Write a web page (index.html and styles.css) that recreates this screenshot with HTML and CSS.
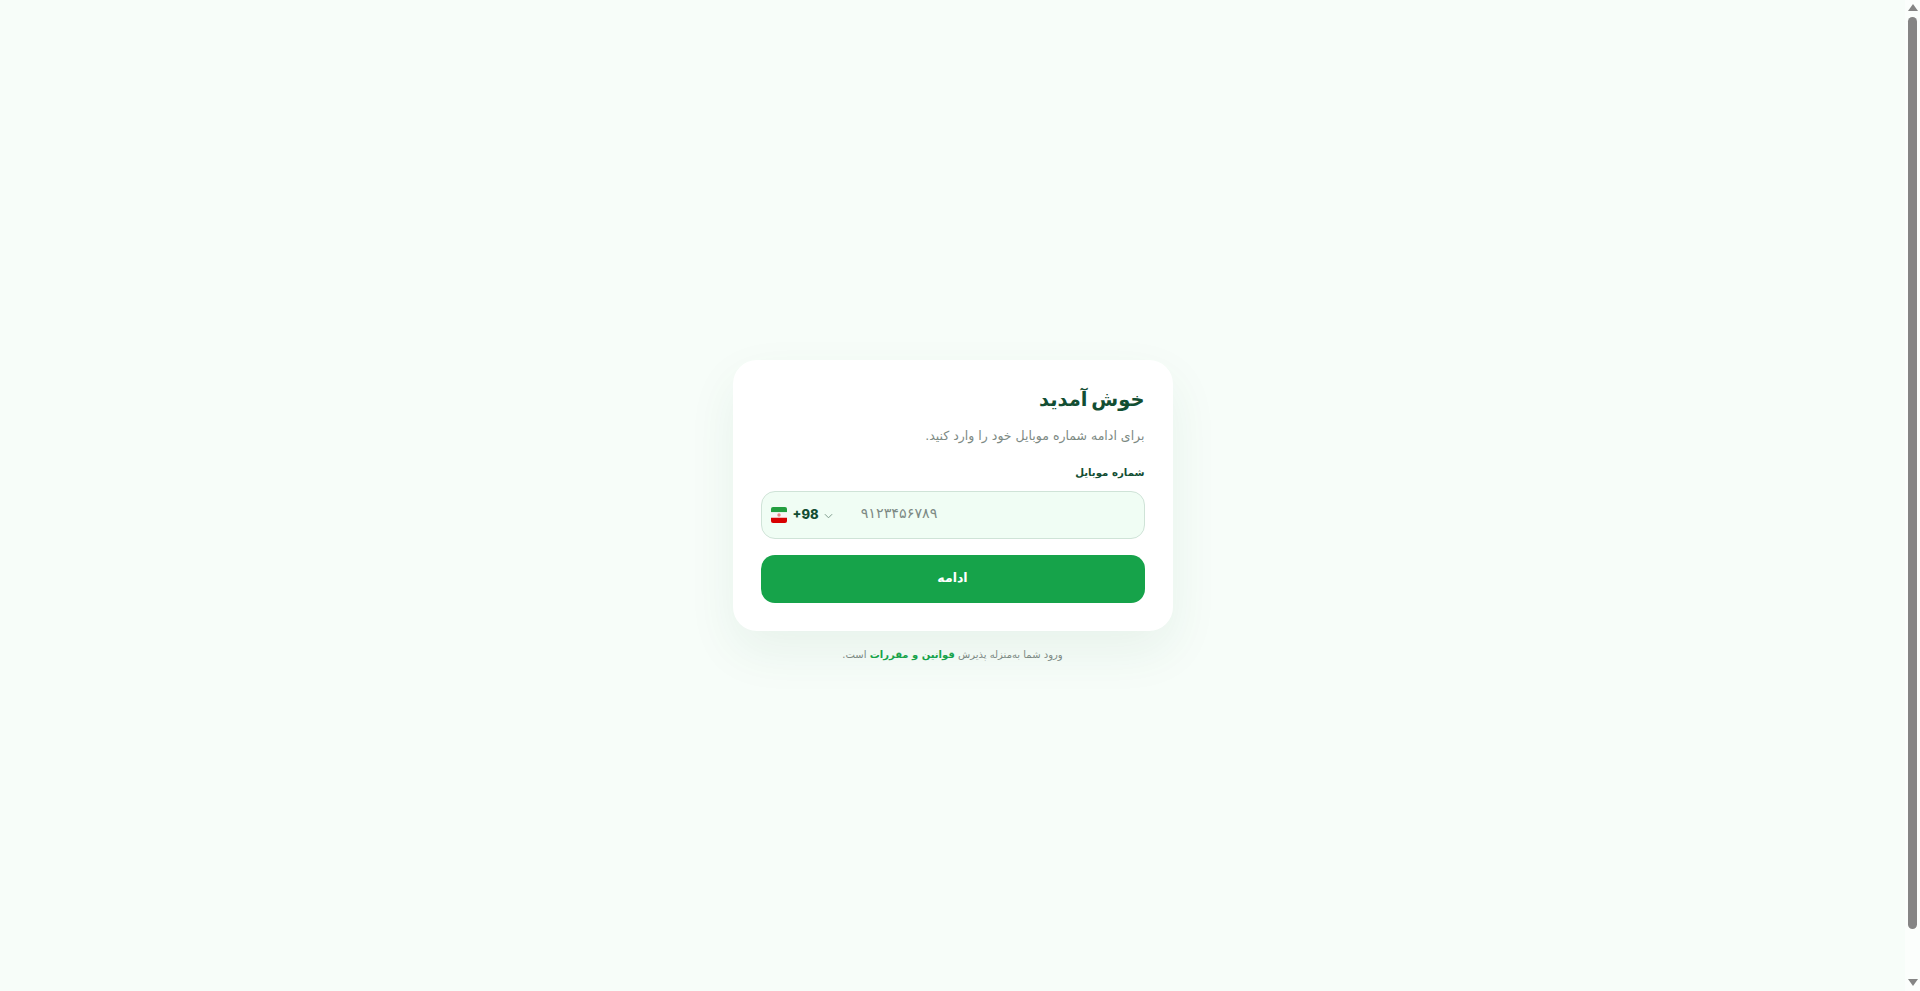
FILE: index.html
```html
<!DOCTYPE html>
<html lang="fa" dir="rtl">
  <head>
    <meta charset="utf-8" />
    <title>ورود</title>
    <link rel="stylesheet" href="styles.css">
  </head>
  <body>
    <div id="main">
      <div id="card">
        <h1>خوش آمدید</h1>
        <p class="subtitle">برای ادامه شماره موبایل خود را وارد کنید.</p>
        <form>
          <label for="mobile">شماره موبایل</label>
          <div class="phone">
            <button type="button" class="country">
              <svg class="flag" viewBox="0 0 16 16" width="16" height="16" aria-hidden="true">
                <path fill="#239f40" d="M0 2a2 2 0 0 1 2-2h12a2 2 0 0 1 2 2v3.300H0z"/>
                <path fill="#f8f5f4" d="M0 5.300h16v5.400H0z"/>
                <path fill="#d80000" d="M0 10.700h16V14a2 2 0 0 1-2 2H2a2 2 0 0 1-2-2z"/>
                <circle cx="8" cy="8" r="1.700" fill="#da0000" opacity=".45"/>
              </svg>
              <span class="code">+98</span>
              <svg class="chevron" viewBox="0 0 10 6" width="9" height="6" aria-hidden="true">
                <path d="M1 1l4 4 4-4" fill="none" stroke="#7c9a8b" stroke-width="1.100"/>
              </svg>
            </button>
            <input id="mobile" type="tel" placeholder="۹۱۲۳۴۵۶۷۸۹">
          </div>
          <button type="submit" class="submit">ادامه</button>
        </form>
      </div>
      <p class="terms">ورود شما به‌منزله پذیرش <a href="#">قوانین و مقررات</a> است.</p>
    </div>
    <div class="scrollbar" aria-hidden="true">
      <span class="arrow up"></span>
      <div class="track"><div class="thumb"></div></div>
      <span class="arrow down"></span>
    </div>
  </body>
</html>
```

FILE: styles.css
```css
*{
  box-sizing: border-box;
  font-family: "DejaVu Sans", "Noto Sans", sans-serif;
}
html{
  overflow: hidden;
}
body{
  margin: 0;
  height: 100vh;
  display: flex;
  direction: ltr;
  background-color: #f7fdf9;
}
#main{
  flex: 1;
  min-width: 0;
  padding-top: 34px;
  display: flex;
  flex-direction: column;
  align-items: center;
  justify-content: center;
  direction: rtl;
}
#card{
  width: 440px;
  padding: 28px;
  background-color: white;
  border-radius: 24px;
  box-shadow: 0 20px 50px rgba(22, 101, 52, .07);
}
h1{
  margin: 0 0 14px;
  font-size: 19.500px;
  line-height: 24px;
  font-weight: 700;
  word-spacing: -3px;
  color: #134e33;
}
.subtitle{
  margin: 0 0 17px;
  font-size: 12.500px;
  line-height: 20px;
  color: #7d8a84;
}
label{
  display: block;
  margin-bottom: 8px;
  font-size: 10.200px;
  line-height: 20px;
  font-weight: 700;
  color: #134e33;
}
.phone{
  display: flex;
  direction: ltr;
  align-items: center;
  height: 48px;
  background-color: #f0fdf4;
  border: 1px solid #cfe3d7;
  border-radius: 14px;
}
.country{
  display: flex;
  align-items: center;
  gap: 5px;
  padding: 0 0 0 9px;
  border: 0;
  background: none;
}
.code{
  margin: -3px 0 0 1px;
  font-family: "Inter", "Liberation Sans", sans-serif;
  font-size: 13px;
  font-weight: 800;
  color: #134e33;
}
.chevron{
  margin-top: 1px;
}
input{
  flex: 1;
  min-width: 0;
  margin: -4px 0 0 28px;
  padding: 0;
  border: 0;
  outline: 0;
  background: none;
  font-size: 14.300px;
  color: #134e33;
}
input::placeholder{
  color: #7d8a84;
  opacity: 1;
}
.submit{
  display: block;
  width: 100%;
  height: 48px;
  margin-top: 16px;
  padding: 0 0 4px;
  border: 0;
  border-radius: 14px;
  background-color: #16a34a;
  color: white;
  font-size: 12.500px;
  font-weight: 700;
  cursor: pointer;
}
.terms{
  margin: 14px 0 0;
  font-size: 10px;
  line-height: 20px;
  color: #7d8a84;
}
.terms a{
  color: #16a34a;
  font-weight: 700;
  text-decoration: none;
}
.scrollbar{
  width: 15px;
  display: flex;
  flex-direction: column;
  align-items: center;
  background-color: #fbfefc;
}
.arrow{
  flex: none;
  width: 0;
  height: 0;
  margin: 4px 0 6px;
  border-left: 5.500px solid transparent;
  border-right: 5.500px solid transparent;
}
.up{
  border-bottom: 7px solid #858585;
}
.down{
  margin: 6px 0 5px;
  border-top: 7px solid #858585;
}
.track{
  flex: 1;
  width: 100%;
  padding: 0 3px;
}
.thumb{
  height: 912px;
  border-radius: 5px;
  background-color: #858585;
}
```
